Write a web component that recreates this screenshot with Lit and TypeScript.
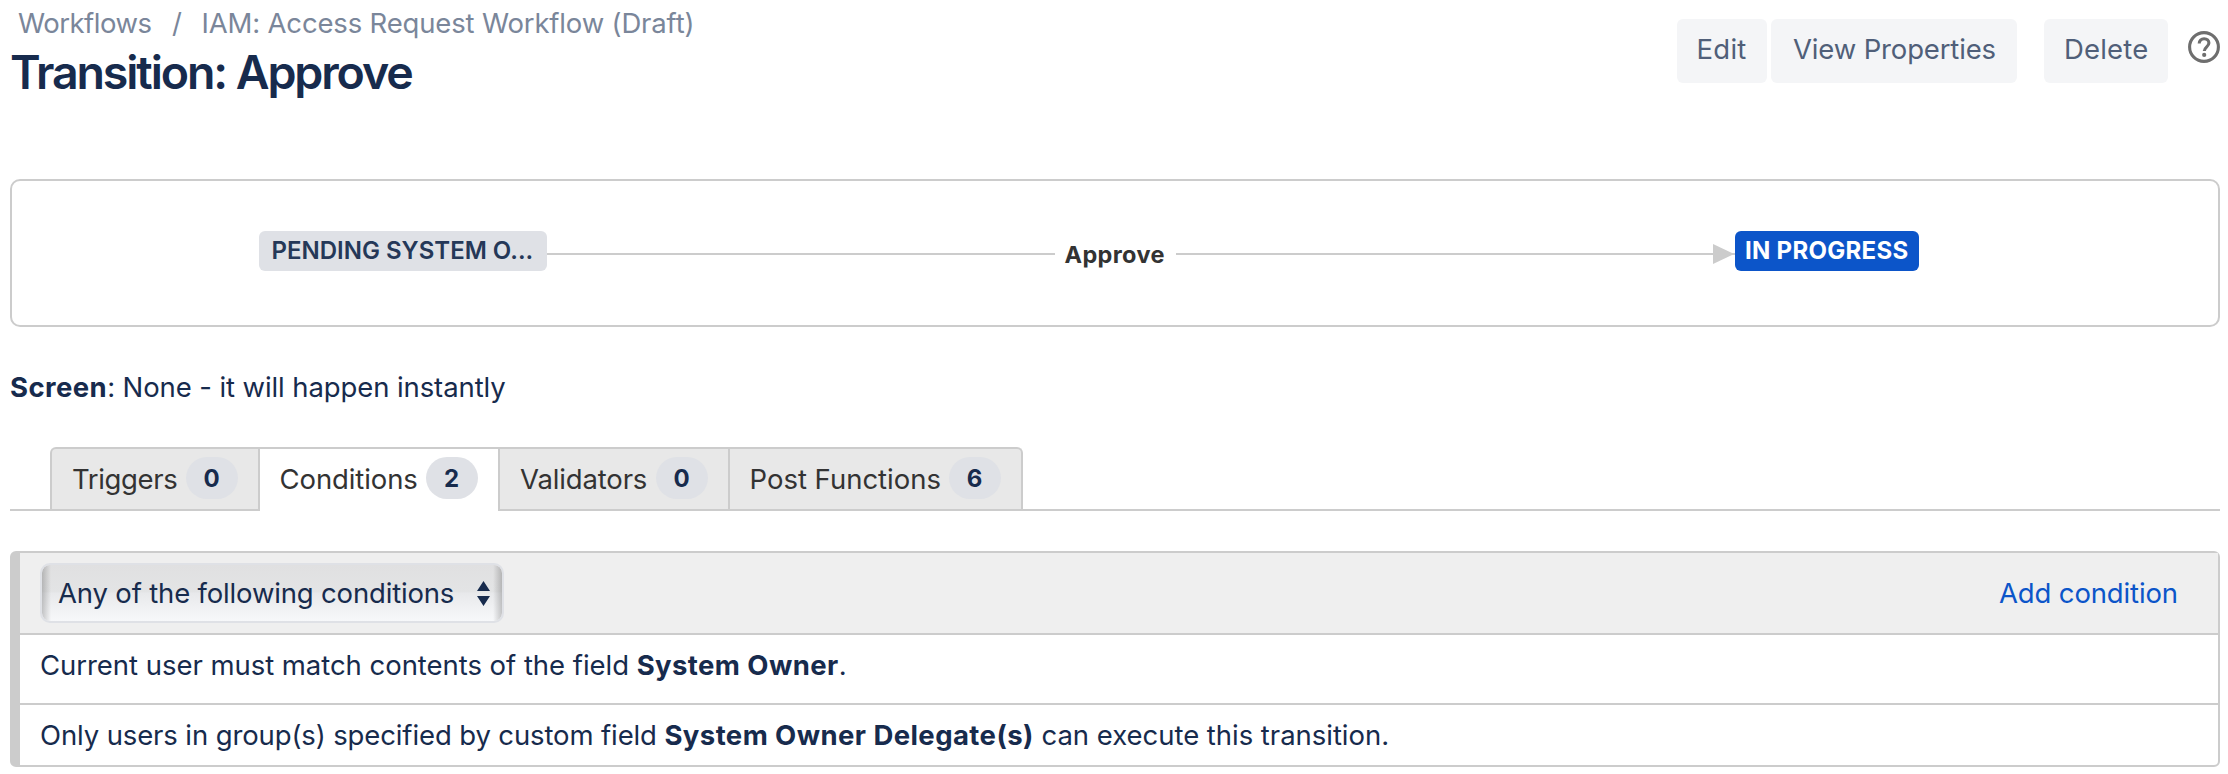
import { LitElement, html, css } from "lit";
import { customElement, property, state } from "lit/decorators.js";
import { classMap } from "lit/directives/class-map.js";

@customElement("status-lozenge")
class StatusLozenge extends LitElement {
  @property({ reflect: true }) kind = "default";
  static styles = css`
    :host { display: block; box-sizing: border-box; height: 40px; margin-bottom: 4px; border-radius: 6px;
      font-size: 24px; line-height: 40px; white-space: nowrap; }
    :host([kind="default"]) { width: 288px; padding-left: 12.5px; background: #dfe1e6; color: #253858; font-weight: 600; }
    :host([kind="current"]) { width: 184px; padding-left: 10px; background: #0c55c9; color: #fff; font-weight: 700; letter-spacing: 0.29px; }
  `;
  render() { return html`<slot></slot>`; }
}

@customElement("app-root")
class AppRoot extends LitElement {
  @state() private active = "Conditions";

  private tabs = [
    { name: "Triggers", count: 0, cls: "t1" },
    { name: "Conditions", count: 2, cls: "t2" },
    { name: "Validators", count: 0, cls: "t3" },
    { name: "Post Functions", count: 6, cls: "t4" },
  ];

  static styles = css`
    :host { display: block; box-sizing: border-box; height: 774px; padding: 0 8px 0 10px; background: #fff;
      font-family: Inter, "Liberation Sans", sans-serif; font-size: 27.5px; color: #172b4d; overflow: hidden; white-space: nowrap; }
    * { box-sizing: border-box; }
    header { display: flex; justify-content: space-between; height: 179px; }
    .crumbs { display: flex; padding: 7px 0 0 8px; height: 39px; line-height: 32px; color: #7a869a; }
    .crumb-a { width: 154px; letter-spacing: -0.5px; }
    .slash { width: 29.5px; }
    .crumb-b { letter-spacing: -0.166px; }
    h1 { margin: 9px 0 0; font-size: 46.5px; line-height: 49px; font-weight: 600; letter-spacing: -2.1px; }
    .actions { display: flex; padding-top: 19px; }
    .btn { height: 64px; border: 0; border-radius: 6px; padding: 0 0 4px 20px; background: #f4f5f7; color: #505f79;
      font: inherit; line-height: 60px; text-align: left; }
    .edit { width: 90px; padding-left: 19.5px; letter-spacing: 0.26px; }
    .props { width: 246px; margin: 0 27px 0 4px; padding-left: 22px; letter-spacing: -0.15px; }
    .delete { width: 124px; letter-spacing: 0.18px; }
    .help { width: 32px; height: 32px; margin: 12px 0 0 20px; display: block; }

    .diagram { display: flex; align-items: center; height: 148px; padding-left: 247px; border: 2px solid #ccc; border-radius: 10px; }
    .line { height: 2px; margin-top: 2px; background: #ccc; }
    .l1 { width: 508px; }
    .l2 { width: 537px; }
    .l3 { width: 3px; }
    .arrow { width: 19px; height: 20px; margin-top: 2px; display: block; }
    .name { width: 121px; padding-left: 9.5px; margin-top: 3px; font-size: 23.5px; font-weight: 700; letter-spacing: 0.35px; color: #333; }

    .screen { margin: 0; line-height: 120px; letter-spacing: -0.1px; }
    strong { font-weight: 700; letter-spacing: 0.42px; }

    .tabs { display: flex; height: 64px; padding-left: 40px; box-shadow: inset 0 -2px #ccc; }
    .tab { display: flex; align-items: center; justify-content: space-between; height: 62px; padding: 0 20px;
      border: solid #ccc; border-width: 2px 2px 0 0; background: #e8e8e8; color: #333; }
    .tab.active { height: 64px; background: linear-gradient(#fff, #fff) padding-box; padding-bottom: 2px; }
    .t1 { width: 210px; border-left-width: 2px; border-top-left-radius: 6px; letter-spacing: -0.35px; }
    .t2 { width: 240px; letter-spacing: -0.1px; padding-left: 19.5px; }
    .t3 { width: 230px; letter-spacing: -0.15px; }
    .t4 { width: 293px; border-top-right-radius: 6px; letter-spacing: -0.01px; padding-left: 19.5px; }
    .badge { width: 52px; height: 42px; margin-bottom: 2px; padding-right: 1px; border-radius: 21px; background: #dfe1e6; color: #172b4d;
      font-size: 24px; line-height: 43px; font-weight: 700; letter-spacing: 0; text-align: center; }

    .panel { margin-top: 40px; height: 216px; border: 2px solid #ccc; border-left-width: 10px; border-radius: 6px; }
    .bar { display: flex; align-items: center; justify-content: space-between; height: 82px; padding: 0 40px 0 20px;
      border-bottom: 2px solid #ccc; background: #efefef; }
    .select { display: flex; align-items: center; justify-content: space-between; width: 464px; height: 60px; padding: 0 12.5px 0 16px;
      border: 2px solid #dfe1e6; border-radius: 10px; letter-spacing: -0.17px;
      background: linear-gradient(90deg, #0003, transparent 9px, transparent calc(100% - 9px), #0003),
        linear-gradient(#e0e0e1, #e3e4e5 48%, #e8e9eb 50%, #f7f8fa); background-clip: padding-box; }
    .carets { width: 13px; height: 25px; display: block; }
    .add { color: #0c55c9; letter-spacing: -0.13px; text-decoration: none; }
    .row { line-height: 60px; padding-left: 20px; }
    .row.first { height: 70px; border-bottom: 2px solid #ccc; letter-spacing: -0.04px; }
    .row.last { letter-spacing: -0.12px; }
    .tail { letter-spacing: -0.03px; }
  `;

  render() {
    return html`
      <header>
        <div>
          <nav class="crumbs">
            <span class="crumb-a">Workflows</span><span class="slash">/</span><span class="crumb-b">IAM: Access Request Workflow (Draft)</span>
          </nav>
          <h1>Transition: Approve</h1>
        </div>
        <div class="actions">
          <button class="btn edit">Edit</button>
          <button class="btn props">View Properties</button>
          <button class="btn delete">Delete</button>
          <svg class="help" viewBox="0 0 32 32" fill="none" stroke="#6e6e6e">
            <circle cx="16" cy="16" r="14.4" stroke-width="3.1" />
            <path d="M11.2 12.6c0-3 2-4.9 4.9-4.9s4.8 1.9 4.8 4.4c0 3.6-4.6 3.9-4.6 8" stroke-width="3.1" />
            <circle cx="16.2" cy="23.9" r="2.1" fill="#6e6e6e" stroke="none" />
          </svg>
        </div>
      </header>
      <section class="diagram">
        <status-lozenge kind="default">PENDING SYSTEM O...</status-lozenge>
        <div class="line l1"></div>
        <div class="name">Approve</div>
        <div class="line l2"></div>
        <svg class="arrow" viewBox="0 0 19 20"><path d="M0 0L19 9V11L0 20Z" fill="#ccc" /></svg>
        <div class="line l3"></div>
        <status-lozenge kind="current">IN PROGRESS</status-lozenge>
      </section>
      <p class="screen"><strong>Screen</strong>: None - it will happen instantly</p>
      <div class="tabs">
        ${this.tabs.map((t) => html`
          <div class=${classMap({ tab: true, [t.cls]: true, active: t.name === this.active })} @click=${() => (this.active = t.name)}>
            <span>${t.name}</span><span class="badge">${t.count}</span>
          </div>`)}
      </div>
      <section class="panel">
        <div class="bar">
          <div class="select">
            <span>Any of the following conditions</span>
            <svg class="carets" viewBox="0 0 13 25" fill="#172b4d"><path d="M6.5 0L13 10H0ZM0 15H13L6.5 25Z" /></svg>
          </div>
          <a class="add">Add condition</a>
        </div>
        <div class="row first">Current user must match contents of the field <strong>System Owner</strong>.</div>
        <div class="row last">Only users in group(s) specified by custom field <strong>System Owner Delegate(s)</strong><span class="tail"> can execute this transition.</span></div>
      </section>
    `;
  }
}
